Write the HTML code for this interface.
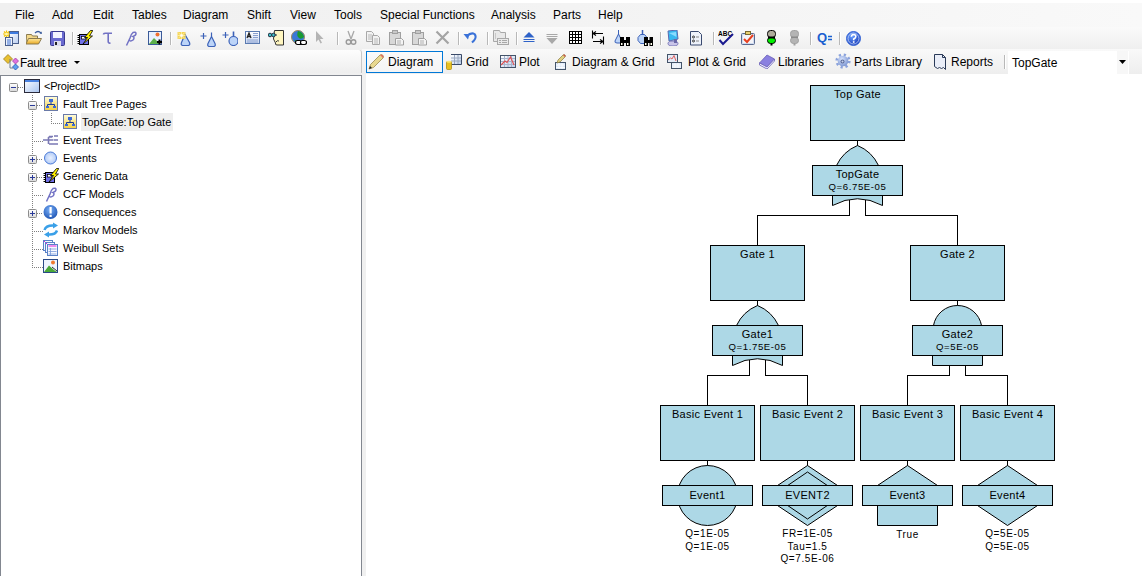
<!DOCTYPE html><html><head><meta charset="utf-8"><style>
*{margin:0;padding:0;box-sizing:border-box}
html,body{width:1142px;height:576px;overflow:hidden;background:#fff;font-family:"Liberation Sans",sans-serif;position:relative}
.a{position:absolute}
#menubar{left:0;top:3px;width:1142px;height:24px;background:linear-gradient(to right,#f0f0f0 0%,#f3f3f3 50%,#f9f9f9 100%)}
.m{position:absolute;top:5px;font-size:12px;color:#000;white-space:nowrap}
#tb1{left:0;top:27px;width:1142px;height:22px;background:linear-gradient(to bottom,#fafafa,#efefef)}
#tb2bg{left:0;top:49px;width:366px;height:26px;background:#f0f0f0}
#tb2l{left:0;top:50px;width:362px;height:23px;background:linear-gradient(to bottom,#fdfdfd,#eeeeee);border-right:1px solid #c8c8c8;border-top-right-radius:3px}
#tb2r{left:362px;top:49px;width:780px;height:25px;background:linear-gradient(to bottom,#f9f9f9,#eeeeee)}
.sep{position:absolute;width:1px;background:#b8b8b8;box-shadow:1px 0 0 #fff}
.t2{position:absolute;top:55px;font-size:12px;color:#000;white-space:nowrap}
#tree{left:0;top:75px;width:362px;height:501px;border:1px solid #828790;border-bottom:none;background:#fff}
#gap{left:362px;top:74px;width:4px;height:502px;background:#f0f0f0}
.tr{position:absolute;font-size:11px;color:#000;white-space:nowrap;line-height:13px}
svg text{font-family:"Liberation Sans",sans-serif}
</style></head><body>
<div id="menubar" class="a">
<span class="m" style="left:15px">File</span>
<span class="m" style="left:52px">Add</span>
<span class="m" style="left:93px">Edit</span>
<span class="m" style="left:132px">Tables</span>
<span class="m" style="left:183px">Diagram</span>
<span class="m" style="left:247px">Shift</span>
<span class="m" style="left:290px">View</span>
<span class="m" style="left:334px">Tools</span>
<span class="m" style="left:380px">Special Functions</span>
<span class="m" style="left:491px">Analysis</span>
<span class="m" style="left:553px">Parts</span>
<span class="m" style="left:598px">Help</span>
</div>
<div id="tb1" class="a"></div>
<div id="tb2bg" class="a"></div>
<div id="tb2l" class="a"></div>
<div id="tb2r" class="a"></div>
<div id="tree" class="a"></div>
<div id="gap" class="a"></div>
<div class="sep" style="left:72px;top:32px;height:13px"></div>
<div class="sep" style="left:170px;top:32px;height:13px"></div>
<div class="sep" style="left:337px;top:32px;height:13px"></div>
<div class="sep" style="left:458px;top:32px;height:13px"></div>
<div class="sep" style="left:487px;top:32px;height:13px"></div>
<div class="sep" style="left:516px;top:32px;height:13px"></div>
<div class="sep" style="left:660px;top:32px;height:13px"></div>
<div class="sep" style="left:713px;top:32px;height:13px"></div>
<div class="sep" style="left:810px;top:32px;height:13px"></div>
<div class="sep" style="left:839px;top:32px;height:13px"></div>
<div class="a" style="left:366px;top:51px;width:77px;height:22px;border:1px solid #0078d7;background:rgba(255,255,255,0.35)"></div>
<span class="t2" style="left:388px">Diagram</span>
<span class="t2" style="left:466px">Grid</span>
<span class="t2" style="left:519px">Plot</span>
<span class="t2" style="left:572px">Diagram &amp; Grid</span>
<span class="t2" style="left:688px">Plot &amp; Grid</span>
<span class="t2" style="left:778px">Libraries</span>
<span class="t2" style="left:854px">Parts Library</span>
<span class="t2" style="left:951px">Reports</span>
<div class="sep" style="left:1004px;top:55px;height:14px"></div>
<div class="a" style="left:1008px;top:51px;width:121px;height:23px;background:#fff"></div>
<div class="a" style="left:1117px;top:51px;width:11px;height:23px;background:#f7f7f7"></div>
<span class="t2" style="left:1012px;top:56px">TopGate</span>
<svg class="a" style="left:1119px;top:60px" width="8" height="5"><path d="M0,0H7L3.5,4Z" fill="#000"/></svg>
<span class="t2" style="left:20px;top:56px;letter-spacing:-0.4px">Fault tree</span>
<svg class="a" style="left:74px;top:61px" width="8" height="5"><path d="M0,0H6L3,3Z" fill="#000"/></svg>
<div class="a" style="left:81px;top:113px;width:92px;height:18px;background:#eeeeee"></div>
<span class="tr" style="left:44px;top:80px;letter-spacing:-0.2px">&lt;ProjectID&gt;</span>
<span class="tr" style="left:63px;top:98px">Fault Tree Pages</span>
<span class="tr" style="left:82px;top:116px">TopGate:Top Gate</span>
<span class="tr" style="left:63px;top:134px">Event Trees</span>
<span class="tr" style="left:63px;top:152px">Events</span>
<span class="tr" style="left:63px;top:170px">Generic Data</span>
<span class="tr" style="left:63px;top:188px">CCF Models</span>
<span class="tr" style="left:63px;top:206px">Consequences</span>
<span class="tr" style="left:63px;top:224px">Markov Models</span>
<span class="tr" style="left:63px;top:242px">Weibull Sets</span>
<span class="tr" style="left:63px;top:260px">Bitmaps</span>
<svg class="a" style="left:3px;top:30px" width="16" height="16" viewBox="0 0 16 16"><defs><linearGradient id="gw" x1="0" y1="0" x2="1" y2="1"><stop offset="0" stop-color="#fff"/><stop offset="1" stop-color="#b9cdf0"/></linearGradient></defs>
<rect x="6.5" y="1.5" width="9" height="12" fill="url(#gw)" stroke="#4a5f8c"/><rect x="7" y="2" width="8" height="2" fill="#3d7be0"/>
<path d="M3.5,0.5v7M0,4h7M1,1.5l5,5M6,1.5l-5,5" stroke="#f2c300" stroke-width="1.2"/><circle cx="3.5" cy="4" r="1.5" fill="#fff6b0"/>
<rect x="2.5" y="7.5" width="7" height="8" fill="#eef3fb" stroke="#4a5f8c"/><path d="M4,10h4M4,12h4M4,14h4" stroke="#3d6fd0"/></svg>
<svg class="a" style="left:26px;top:30px" width="16" height="16" viewBox="0 0 16 16"><defs><linearGradient id="go" x1="0" y1="0" x2="0" y2="1"><stop offset="0" stop-color="#ffe9a0"/><stop offset="1" stop-color="#e8a820"/></linearGradient></defs>
<path d="M0.5,4.5h5l1,1.5h5v7.5h-11.5z" fill="#f3d88a" stroke="#8a7a50"/><path d="M2.5,8.5h13l-3,5.5h-12.5z" fill="url(#go)" stroke="#8a7a50"/>
<path d="M9,3 Q12,0 15,3" fill="none" stroke="#3a5c9c" stroke-width="1.2"/><path d="M13.5,3.5l2.5,0.5l-0.5,-2.5z" fill="#3a5c9c"/></svg>
<svg class="a" style="left:50px;top:31px" width="16" height="16" viewBox="0 0 16 16"><rect x="0.5" y="0.5" width="14" height="14" rx="1" fill="#6a6ad0" stroke="#3a3a90"/><rect x="3" y="1" width="9" height="6" fill="#f4f4ff"/><rect x="4" y="10" width="7" height="5" fill="#dde"/><rect x="5" y="11" width="2" height="3" fill="#222"/></svg>
<svg class="a" style="left:77px;top:30px" width="16" height="16" viewBox="0 0 16 16"><rect x="2.5" y="4.5" width="9" height="10" fill="#7070e8" stroke="#000"/><path d="M0.5,5.5h2M0.5,7.5h2M0.5,9.5h2M0.5,11.5h2M0.5,13.5h2" stroke="#000"/><rect x="4.5" y="6.5" width="4" height="2.5" fill="#fff" stroke="#000" stroke-width=".7"/>
<path d="M13.5,0.5 L7.5,7.5 L10.5,7.5 L6,14 L15.5,6 L12.5,6 L15.8,0.5Z" fill="#fff000" stroke="#000" stroke-width=".8"/></svg>
<svg class="a" style="left:100px;top:30px" width="16" height="16" viewBox="0 0 16 16"><path d="M3.5,4.5 Q3.5,3 6,3.2 L12,3.2 M8.2,3.2 V11.5 Q8.2,13.5 10.5,13" fill="none" stroke="#7272c4" stroke-width="1.6"/></svg>
<svg class="a" style="left:123px;top:30px" width="16" height="16" viewBox="0 0 16 16"><path d="M3.5,15.5 L7,8 Q8,4 10,2.5 Q13,1.5 13,3.5 Q13,5.5 10,6.5 Q12,7.5 10,10 Q8,11.5 6.5,10.5" fill="none" stroke="#7272c4" stroke-width="1.5"/></svg>
<svg class="a" style="left:147px;top:30px" width="16" height="16" viewBox="0 0 16 16"><rect x="1.5" y="1.5" width="13" height="13" fill="#e8f0ff" stroke="#3a5a98"/><path d="M2,14 L7,8 L12,13 L12,14Z" fill="#5bb048"/><circle cx="10.5" cy="4.5" r="2" fill="#f07030"/><path d="M10,12h5M12.5,9.5v5" stroke="#000" stroke-width="2"/></svg>
<svg class="a" style="left:176px;top:30px" width="16" height="16" viewBox="0 0 16 16"><path d="M9,4.5 L13.5,12.5 Q14.5,15.5 12,15.5 L7,15.5 Q4.5,15.5 5.5,12.5 Z" fill="#bcd4f8" stroke="#3c62b8" stroke-width="1.2"/><rect x="1.5" y="2" width="8" height="7" fill="#f4d048" opacity=".9"/><path d="M5.5,2v7M1.5,5.5h8M2.5,3l6,5M8.5,3l-6,5" stroke="#fff4b0" stroke-width=".8"/><circle cx="5.5" cy="5.5" r="1.2" fill="#fff"/></svg>
<svg class="a" style="left:200px;top:31px" width="16" height="16" viewBox="0 0 16 16"><path d="M0.5,5h6M3.5,2v6" stroke="#3c62b8" stroke-width="1.2"/><path d="M11.5,1.5v4" stroke="#3c62b8" stroke-width="1.2"/>
<path d="M11.5,5.5 L15,12.5 Q16,15.5 13.5,15.5 L9.5,15.5 Q7,15.5 8,12.5 Z" fill="#bcd4f8" stroke="#3c62b8" stroke-width="1.2"/></svg>
<svg class="a" style="left:222px;top:30px" width="16" height="16" viewBox="0 0 16 16"><path d="M0.5,5h6M3.5,2v6" stroke="#3c62b8" stroke-width="1.2"/><path d="M11.5,1.5v5" stroke="#3c62b8" stroke-width="1.6"/>
<circle cx="11.5" cy="11" r="4.5" fill="#bcd4f8" stroke="#3c62b8" stroke-width="1.2"/></svg>
<svg class="a" style="left:245px;top:30px" width="16" height="16" viewBox="0 0 16 16"><defs><linearGradient id="gt" x1="0" y1="0" x2="0" y2="1"><stop offset="0" stop-color="#fff"/><stop offset="1" stop-color="#c8d6f0"/></linearGradient></defs>
<rect x="0.5" y="1.5" width="14" height="12" fill="url(#gt)" stroke="#5a7ab0"/><path d="M2,8 L4,3 L6,8 M2.8,6.5h2.4" fill="none" stroke="#222" stroke-width="1.3"/><path d="M8,3.5h5M8,5.5h5M8,7.5h5M2,10h11M2,12h11" stroke="#8aa0d0"/></svg>
<svg class="a" style="left:268px;top:30px" width="16" height="16" viewBox="0 0 16 16"><path d="M6.5,0.5 L15.5,0.5 L15.5,15 L9,15 Q7,15 7.5,13 L5.5,9 Z" fill="#fff6c0" stroke="#333"/><path d="M8,12 Q9,10 11,11" fill="none" stroke="#333"/>
<circle cx="2" cy="5" r="1.8" fill="#40c0c8" stroke="#234"/><circle cx="5.5" cy="5" r="1.8" fill="#40c0c8" stroke="#234"/><path d="M6.5,5 H9" stroke="#234"/></svg>
<svg class="a" style="left:291px;top:30px" width="16" height="16" viewBox="0 0 16 16"><circle cx="7" cy="7" r="6.5" fill="#3a78d8" stroke="#a08a60"/><path d="M7,1 Q12,2 13,7 Q10,10 8,8 Q5,6 7,1Z" fill="#1a9a30"/><path d="M3,10 Q5,9 6,12" fill="#1a9a30"/>
<rect x="4.5" y="10.5" width="6" height="4" rx="2" fill="#fff" stroke="#000" stroke-width="1.2"/><rect x="9.5" y="10.5" width="6" height="4" rx="2" fill="#fff" stroke="#000" stroke-width="1.2"/></svg>
<svg class="a" style="left:314px;top:30px" width="16" height="16" viewBox="0 0 16 16"><path d="M2,1 L2,12 L4.5,9.5 L6.5,13.5 L8,12.8 L6,9 L9.5,9Z" fill="#b4b4b4"/></svg>
<svg class="a" style="left:343px;top:30px" width="16" height="16" viewBox="0 0 16 16"><path d="M5,1 L8,9 M11,1 L8,9" stroke="#a8a8a8" stroke-width="1.3"/><circle cx="5.5" cy="12" r="2.3" fill="#eee" stroke="#9a9a9a" stroke-width="1.4"/><circle cx="10.5" cy="12" r="2.3" fill="#eee" stroke="#9a9a9a" stroke-width="1.4"/></svg>
<svg class="a" style="left:366px;top:30px" width="16" height="16" viewBox="0 0 16 16"><path d="M0.5,1.5h5l2,2v8h-7z" fill="#f2f2f2" stroke="#a8a8a8"/><path d="M6.5,5.5h5l2,2v7h-7z" fill="#f2f2f2" stroke="#a8a8a8"/><path d="M2,5h4M2,7h4M2,9h4M8,9h4M8,11h4M8,13h4" stroke="#b8b8b8"/></svg>
<svg class="a" style="left:389px;top:30px" width="16" height="16" viewBox="0 0 16 16"><rect x="0.5" y="2.5" width="11" height="12" fill="#d8d8d8" stroke="#a0a0a0"/><rect x="3.5" y="0.5" width="5" height="3" fill="#c8c8c8" stroke="#a0a0a0"/><path d="M6.5,8.5h6l2,2v4.5h-8z" fill="#f4f4f4" stroke="#a0a0a0"/><path d="M8,11h4M8,13h4" stroke="#b0b0b0"/></svg>
<svg class="a" style="left:412px;top:30px" width="16" height="16" viewBox="0 0 16 16"><rect x="0.5" y="2.5" width="11" height="12" fill="#d8d8d8" stroke="#a0a0a0"/><rect x="3.5" y="0.5" width="5" height="3" fill="#c8c8c8" stroke="#a0a0a0"/><path d="M6.5,8.5h6l2,2v4.5h-8z" fill="#f4f4f4" stroke="#a0a0a0"/><path d="M8,11h4M8,13h4" stroke="#b0b0b0"/></svg>
<svg class="a" style="left:435px;top:30px" width="16" height="16" viewBox="0 0 16 16"><path d="M1.5,1.5 L13.5,13.5 M13.5,1.5 L1.5,13.5" stroke="#a4a4a4" stroke-width="2.2"/></svg>
<svg class="a" style="left:463px;top:30px" width="16" height="16" viewBox="0 0 16 16"><path d="M3.5,6.5 Q8,2 11.5,4 Q14,7 11,10.5 L9,12.5" fill="none" stroke="#3a72d8" stroke-width="2"/><path d="M0.5,4 L5,9.5 L6.5,4Z" fill="#3a72d8"/></svg>
<svg class="a" style="left:493px;top:30px" width="16" height="16" viewBox="0 0 16 16"><path d="M0.5,0.5h6l1,2h5v9h-12z" fill="#e8e8e8" stroke="#a8a8a8"/><rect x="4.5" y="8.5" width="11" height="6" fill="#eaeaea" stroke="#a8a8a8"/><path d="M2,4h1M2,6h1M2,8h1M6,10.5h2M9,10.5h5M6,12.5h2M9,12.5h5" stroke="#a8a8a8"/></svg>
<svg class="a" style="left:522px;top:30px" width="16" height="16" viewBox="0 0 16 16"><path d="M1.5,7.5 L7,2 L12.5,7.5Z" fill="#2e62c8"/><path d="M1.5,9.5h11M1.5,11.5h11" stroke="#2e62c8" stroke-width="1.2"/></svg>
<svg class="a" style="left:545px;top:30px" width="16" height="16" viewBox="0 0 16 16"><path d="M1.5,4.5h11M1.5,6.5h11" stroke="#a8a8a8" stroke-width="1.2"/><path d="M1.5,8 L7,14 L12.5,8Z" fill="#a8a8a8"/></svg>
<svg class="a" style="left:568px;top:30px" width="16" height="16" viewBox="0 0 16 16"><rect x="1" y="1" width="13" height="13" fill="#000"/><g fill="#fff"><rect x="2" y="2" width="2" height="2"/><rect x="5" y="2" width="2" height="2"/><rect x="8" y="2" width="2" height="2"/><rect x="11" y="2" width="2" height="2"/>
<rect x="2" y="5" width="2" height="2"/><rect x="5" y="5" width="2" height="2"/><rect x="8" y="5" width="2" height="2"/><rect x="11" y="5" width="2" height="2"/>
<rect x="2" y="8" width="2" height="2"/><rect x="5" y="8" width="2" height="2"/><rect x="8" y="8" width="2" height="2"/><rect x="11" y="8" width="2" height="2"/>
<rect x="2" y="11" width="2" height="2"/><rect x="5" y="11" width="2" height="2"/><rect x="8" y="11" width="2" height="2"/><rect x="11" y="11" width="2" height="2"/></g></svg>
<svg class="a" style="left:591px;top:30px" width="16" height="16" viewBox="0 0 16 16"><path d="M1.5,0.5v8M2,3.5h10M2,3.5l3,-2M2,3.5l3,2M12.5,6.5v8M2,11.5h10M12,11.5l-3,-2M12,11.5l-3,2" fill="none" stroke="#000" stroke-width="1.1"/></svg>
<svg class="a" style="left:614px;top:30px" width="16" height="16" viewBox="0 0 16 16"><path d="M4.5,0v5" stroke="#3c62b8"/><path d="M4.5,4 L8,11 Q8.5,13 6,13 L3,13 Q0.5,13 1,11Z" fill="#bcd4f8" stroke="#3c62b8"/>
<g fill="#000"><rect x="6" y="7" width="4" height="9"/><rect x="12" y="7" width="4" height="9"/><rect x="9" y="10" width="4" height="3"/></g><g fill="#ffe"><rect x="7" y="13" width="1.5" height="2"/><rect x="13" y="13" width="1.5" height="2"/></g></svg>
<svg class="a" style="left:637px;top:30px" width="16" height="16" viewBox="0 0 16 16"><path d="M5.5,0v4" stroke="#3c62b8" stroke-width="1.5"/><path d="M3.5,4.5h4l2.5,3v3l-2.5,3h-4l-2.5,-3v-3z" fill="#bcd4f8" stroke="#3c62b8"/>
<g fill="#000"><rect x="7" y="7" width="4" height="9"/><rect x="12.5" y="7" width="3.5" height="9"/><rect x="10" y="10" width="3" height="3"/></g><g fill="#ffe"><rect x="8" y="13" width="1.5" height="2"/><rect x="13.5" y="13" width="1.5" height="2"/></g></svg>
<svg class="a" style="left:665px;top:30px" width="16" height="16" viewBox="0 0 16 16"><path d="M3,1 L12,0 L13,9 L4,11Z" fill="#38b8f0" stroke="#5a6ab0"/><path d="M4,3 L11,2 L11.5,7Z" fill="#8adcff"/><ellipse cx="8" cy="13.5" rx="5" ry="2.5" fill="#c8c4e8" stroke="#7a78b8"/><rect x="9" y="9" width="3" height="4" fill="#6a68a8"/></svg>
<svg class="a" style="left:688px;top:30px" width="16" height="16" viewBox="0 0 16 16"><path d="M2.5,1.5h8l3,3v10.5h-11z" fill="#eef2fa" stroke="#3a4a70"/><circle cx="5.5" cy="7" r="1" fill="none" stroke="#333"/><circle cx="5.5" cy="11" r="1" fill="none" stroke="#333"/><path d="M8,7h3M8,11h3" stroke="#888"/></svg>
<svg class="a" style="left:718px;top:30px" width="16" height="16" viewBox="0 0 16 16"><text x="0" y="6" font-size="6.5" font-family="Liberation Mono" font-weight="bold" fill="#000">ABC</text><path d="M1.5,10 L5,14 L15,4" fill="none" stroke="#1a1a90" stroke-width="2"/></svg>
<svg class="a" style="left:741px;top:30px" width="16" height="16" viewBox="0 0 16 16"><rect x="0.5" y="3.5" width="13" height="11" rx="1" fill="#d0dcf0" stroke="#5a6a90"/><rect x="4.5" y="1.5" width="5" height="3" fill="#e8d070" stroke="#7a6a30"/><rect x="2" y="5" width="10" height="8" fill="#f4f4f8"/><path d="M3,9 L6,12 L12,5" fill="none" stroke="#e84020" stroke-width="2"/></svg>
<svg class="a" style="left:764px;top:30px" width="16" height="16" viewBox="0 0 16 16"><rect x="3.5" y="0.5" width="8" height="7" rx="3" fill="#b0ac9c" stroke="#000"/><rect x="3.5" y="7.5" width="8" height="6" rx="3" fill="#00f000" stroke="#000"/><rect x="4" y="6.5" width="7" height="2" fill="#000"/><rect x="6.5" y="13.5" width="2" height="2" fill="#000"/></svg>
<svg class="a" style="left:787px;top:30px" width="16" height="16" viewBox="0 0 16 16"><rect x="3.5" y="0.5" width="8" height="7" rx="3" fill="#b4b4b4" stroke="#a0a0a0"/><rect x="3.5" y="7.5" width="8" height="6" rx="3" fill="#b4b4b4" stroke="#a0a0a0"/><rect x="4" y="6.5" width="7" height="1.5" fill="#8a8a8a"/><rect x="6.5" y="13.5" width="2" height="2" fill="#a0a0a0"/></svg>
<svg class="a" style="left:817px;top:29px" width="16" height="16" viewBox="0 0 16 16"><text x="0" y="13" font-size="13" font-family="Liberation Serif" font-weight="bold" fill="#1a5fd0">Q</text><path d="M11,7.5h4M11,10.5h4" stroke="#1a5fd0" stroke-width="1.6"/></svg>
<svg class="a" style="left:846px;top:31px" width="16" height="16" viewBox="0 0 16 16"><defs><radialGradient id="gh" cx=".4" cy=".35" r=".7"><stop offset="0" stop-color="#6aa0ff"/><stop offset="1" stop-color="#1030b0"/></radialGradient></defs><circle cx="7.5" cy="7.5" r="7" fill="url(#gh)" stroke="#3a6ad8"/><circle cx="7.5" cy="7.5" r="5.5" fill="none" stroke="#c8dcff" stroke-width=".8"/>
<path d="M5.3,5.8 Q5.5,3.5 7.6,3.5 Q10,3.6 9.8,5.6 Q9.6,7 7.7,8 L7.7,9.2" fill="none" stroke="#fff" stroke-width="1.6"/><rect x="6.9" y="10.2" width="1.6" height="1.6" fill="#fff"/></svg>
<svg class="a" style="left:3px;top:54px" width="16" height="16" viewBox="0 0 16 16"><path d="M0.5,5 L5,0.5 L9.5,5 L5,9.5Z" fill="#e8c030" stroke="#a08020" stroke-width=".8"/><path d="M7,5v9h3" fill="none" stroke="#708090"/><path d="M9.5,7 L12.5,4 L15.5,7 L12.5,10Z" fill="#e070e0" stroke="#a040a0" stroke-width=".8"/><path d="M9.5,13 L12.5,10 L15.5,13 L12.5,16Z" fill="#60a0f0" stroke="#2050b0" stroke-width=".8"/></svg>
<svg class="a" style="left:368px;top:54px" width="16" height="16" viewBox="0 0 16 16"><path d="M1,15 L2.5,10.5 L12,1 Q13.5,0 15,1.5 Q16,3 15,4 L5.5,13.5Z" fill="#e8d890" stroke="#9a8a50" stroke-width=".8"/><path d="M12,1 Q13.5,0 15,1.5 Q16,3 15,4 L13,2Z" fill="#e07060"/><path d="M1,15 L2,12 L4,14Z" fill="#222"/></svg>
<svg class="a" style="left:446px;top:54px" width="16" height="16" viewBox="0 0 16 16"><defs><linearGradient id="gg" x1="0" y1="0" x2="1" y2="1"><stop offset="0" stop-color="#fff"/><stop offset="1" stop-color="#b8cce8"/></linearGradient></defs><rect x="5" y="1" width="10.5" height="9.5" fill="url(#gg)"/><path d="M5,4h10M5,7h10M8.5,1v9M12,1v9" stroke="#9aa8c0" stroke-width="1"/><path d="M5,0.5h10.5v10h-10" fill="none" stroke="#3a4a68"/><rect x="0.5" y="7.5" width="5" height="8" rx="1" fill="#e8c020" stroke="#b09010" stroke-width=".8"/><ellipse cx="3" cy="7.8" rx="2.5" ry="1" fill="#f8e878"/></svg>
<svg class="a" style="left:500px;top:53px" width="16" height="16" viewBox="0 0 16 16"><defs><linearGradient id="gq" x1="0" y1="0" x2="1" y2="1"><stop offset="0" stop-color="#fff"/><stop offset="1" stop-color="#c0d0ec"/></linearGradient></defs><rect x="0.5" y="2.5" width="15" height="12" fill="url(#gq)" stroke="#44546a"/><path d="M1,5.5h14M1,8.5h14M1,11.5h14M4.5,3v11M8,3v11M11.5,3v11" stroke="#a8b4cc" stroke-width="1"/><path d="M1,12 L5,8 L7,9.5 L10.5,4 L14,12" fill="none" stroke="#e05050" stroke-width="1.1"/></svg>
<svg class="a" style="left:554px;top:54px" width="16" height="16" viewBox="0 0 16 16"><rect x="1.5" y="8.5" width="10" height="7" fill="#dde8f8" stroke="#44546a"/><path d="M2,11h9M2,13.5h9M5,9v6M8,9v6" stroke="#fff" stroke-width=".8"/><path d="M3,9 L4,6 L9,1 Q10,0 11,1 Q12,2 11,3 L6,8Z" fill="#e0d080" stroke="#8a7a40" stroke-width=".7"/><path d="M9,1 Q10,0 11,1 Q12,2 11,3Z" fill="#d05050"/></svg>
<svg class="a" style="left:667px;top:53px" width="16" height="16" viewBox="0 0 16 16"><rect x="0.5" y="1.5" width="10" height="8" fill="#e4ecf8" stroke="#44546a"/><path d="M1,7 L3.5,5 L5,6 L7,2.5 L9,8" fill="none" stroke="#e06060"/><rect x="4.5" y="9.5" width="10" height="6" fill="#dde8f8" stroke="#44546a"/><path d="M5,12h9M5,14h9M8,10v5M11,10v5" stroke="#fff" stroke-width=".8"/></svg>
<svg class="a" style="left:759px;top:53px" width="16" height="16" viewBox="0 0 16 16"><path d="M0.5,10 L8,2 L15.5,6 L8,14Z" fill="#8a80e0" stroke="#6a60b8" stroke-width=".8"/><path d="M0.5,10 L8,14 L15.5,6 L15.5,8 L8,16 L0.5,12Z" fill="#f0f0ff" stroke="#6a60b8" stroke-width=".8"/></svg>
<svg class="a" style="left:835px;top:53px" width="16" height="16" viewBox="0 0 16 16"><defs><radialGradient id="gge" cx=".4" cy=".35" r=".7"><stop offset="0" stop-color="#d8e4ff"/><stop offset="1" stop-color="#7a94d0"/></radialGradient></defs><circle cx="8" cy="8" r="6.3" fill="none" stroke="#8aa2dc" stroke-width="2.6" stroke-dasharray="2.2 2.75"/><circle cx="8" cy="8" r="5.3" fill="url(#gge)"/><circle cx="7.5" cy="8.5" r="2" fill="#5a6a98"/><circle cx="7.5" cy="8.5" r="1" fill="#c8d4f0"/></svg>
<svg class="a" style="left:933px;top:54px" width="16" height="16" viewBox="0 0 16 16"><path d="M1.5,0.5h8l3,3v12 l-2,-2 l-2,1 l-2,-1 l-2,1 l-3,-2z" fill="#eaeef8" stroke="#2a3a58"/><path d="M9.5,0.5v3h3" fill="none" stroke="#2a3a58"/></svg>
<svg class="a" style="left:24px;top:78px" width="16" height="16" viewBox="0 0 16 16"><defs><linearGradient id="gp" x1="0" y1="0" x2="1" y2="1"><stop offset="0" stop-color="#fff"/><stop offset="1" stop-color="#a8c4f0"/></linearGradient></defs><rect x="0.5" y="1.5" width="15" height="13" fill="url(#gp)" stroke="#2a2a3a"/><rect x="1" y="2" width="14" height="2" fill="#4a82e0"/></svg>
<svg class="a" style="left:43px;top:96px" width="16" height="16" viewBox="0 0 16 16"><defs><linearGradient id="gf" x1="0" y1="0" x2="0" y2="1"><stop offset="0" stop-color="#fffde0"/><stop offset="1" stop-color="#f4d040"/></linearGradient></defs><rect x="1.5" y="0.5" width="13" height="14" fill="url(#gf)" stroke="#6a7aa8"/><rect x="6" y="3" width="4" height="3" fill="#3a6ad8"/><path d="M8,6v2M4.5,10V8.5h7V10" fill="none" stroke="#1a3a98"/><rect x="3" y="10" width="3" height="2" fill="#3a6ad8"/><rect x="10" y="10" width="3" height="2" fill="#3a6ad8"/></svg>
<svg class="a" style="left:62px;top:114px" width="16" height="16" viewBox="0 0 16 16"><defs><linearGradient id="gf" x1="0" y1="0" x2="0" y2="1"><stop offset="0" stop-color="#fffde0"/><stop offset="1" stop-color="#f4d040"/></linearGradient></defs><rect x="1.5" y="0.5" width="13" height="14" fill="url(#gf)" stroke="#6a7aa8"/><rect x="6" y="3" width="4" height="3" fill="#3a6ad8"/><path d="M8,6v2M4.5,10V8.5h7V10" fill="none" stroke="#1a3a98"/><rect x="3" y="10" width="3" height="2" fill="#3a6ad8"/><rect x="10" y="10" width="3" height="2" fill="#3a6ad8"/></svg>
<svg class="a" style="left:43px;top:132px" width="16" height="16" viewBox="0 0 16 16"><path d="M0,8h5M5.5,5v7M5.5,8h5M5.5,5h3.5M6,4.5h4M6,12h9M11,4h4M11,8h4" fill="none" stroke="#7a78b4" stroke-width="1.6"/></svg>
<svg class="a" style="left:43px;top:150px" width="16" height="16" viewBox="0 0 16 16"><defs><radialGradient id="ge" cx=".5" cy=".5" r=".6"><stop offset="0" stop-color="#e8f0ff"/><stop offset="1" stop-color="#a8c4f4"/></radialGradient></defs><circle cx="7.5" cy="8" r="6" fill="url(#ge)" stroke="#4a7ad8"/></svg>
<svg class="a" style="left:43px;top:168px" width="16" height="16" viewBox="0 0 16 16"><rect x="2.5" y="4.5" width="9" height="10" fill="#7070e8" stroke="#000"/><path d="M0.5,5.5h2M0.5,7.5h2M0.5,9.5h2M0.5,11.5h2M0.5,13.5h2" stroke="#000"/><rect x="4.5" y="6.5" width="4" height="2.5" fill="#fff" stroke="#000" stroke-width=".7"/>
<path d="M13.5,0.5 L7.5,7.5 L10.5,7.5 L6,14 L15.5,6 L12.5,6 L15.8,0.5Z" fill="#fff000" stroke="#000" stroke-width=".8"/></svg>
<svg class="a" style="left:43px;top:186px" width="16" height="16" viewBox="0 0 16 16"><path d="M3.5,15.5 L7,8 Q8,4 10,2.5 Q13,1.5 13,3.5 Q13,5.5 10,6.5 Q12,7.5 10,10 Q8,11.5 6.5,10.5" fill="none" stroke="#7272c4" stroke-width="1.5"/></svg>
<svg class="a" style="left:43px;top:204px" width="16" height="16" viewBox="0 0 16 16"><defs><radialGradient id="gc" cx=".45" cy=".35" r=".7"><stop offset="0" stop-color="#7ab0f8"/><stop offset="1" stop-color="#1a50b0"/></radialGradient></defs><circle cx="7.5" cy="8" r="7" fill="url(#gc)"/><rect x="6.5" y="3" width="2.2" height="6.5" fill="#fff"/><rect x="6.5" y="10.8" width="2.2" height="2.2" fill="#fff"/></svg>
<svg class="a" style="left:43px;top:222px" width="16" height="16" viewBox="0 0 16 16"><path d="M1.5,8 Q3,3 11,3.5" fill="none" stroke="#3aa0e8" stroke-width="2.5"/><path d="M10,0.5 L15,3.5 L10,6.5Z" fill="#3aa0e8"/><path d="M14,8.5 Q12.5,13 5,12.5" fill="none" stroke="#3aa0e8" stroke-width="2.5"/><path d="M6,9.5 L1,12.5 L6,15.5Z" fill="#3aa0e8"/></svg>
<svg class="a" style="left:43px;top:240px" width="16" height="16" viewBox="0 0 16 16"><rect x="0.5" y="0.5" width="9" height="10" fill="#f4f8ff" stroke="#5a82c8"/><rect x="2.5" y="2.5" width="9" height="10" fill="#f4f8ff" stroke="#5a82c8"/><rect x="4.5" y="4.5" width="10" height="11" fill="#f8faff" stroke="#5a82c8"/><path d="M1,1.5h1M3,3.5h1M5.5,6h8" stroke="#e020e0"/><path d="M5.5,9h8M5.5,11.5h8M5.5,14h8M7.5,8v7" stroke="#7a9ad8" stroke-width=".8"/></svg>
<svg class="a" style="left:43px;top:258px" width="16" height="16" viewBox="0 0 16 16"><rect x="0.5" y="1.5" width="14" height="13" fill="#eef4ff" stroke="#2a4a88"/><path d="M1,14 L6,7.5 L11,12 L14,14Z" fill="#4aa838"/><path d="M9,9 L14,13" stroke="#333"/><circle cx="10" cy="4.5" r="2" fill="#f07a30"/></svg>
<div class="a" style="left:18px;top:87px;width:6px;height:1px;background:repeating-linear-gradient(to right,#808080 0 1px,transparent 1px 2px)"></div>
<div class="a" style="left:32px;top:95px;width:1px;height:172px;background:repeating-linear-gradient(to bottom,#808080 0 1px,transparent 1px 2px)"></div>
<div class="a" style="left:37px;top:105px;width:6px;height:1px;background:repeating-linear-gradient(to right,#808080 0 1px,transparent 1px 2px)"></div>
<div class="a" style="left:51px;top:113px;width:1px;height:11px;background:repeating-linear-gradient(to bottom,#808080 0 1px,transparent 1px 2px)"></div>
<div class="a" style="left:51px;top:123px;width:11px;height:1px;background:repeating-linear-gradient(to right,#808080 0 1px,transparent 1px 2px)"></div>
<div class="a" style="left:32px;top:141px;width:11px;height:1px;background:repeating-linear-gradient(to right,#808080 0 1px,transparent 1px 2px)"></div>
<div class="a" style="left:37px;top:159px;width:6px;height:1px;background:repeating-linear-gradient(to right,#808080 0 1px,transparent 1px 2px)"></div>
<div class="a" style="left:37px;top:177px;width:6px;height:1px;background:repeating-linear-gradient(to right,#808080 0 1px,transparent 1px 2px)"></div>
<div class="a" style="left:32px;top:195px;width:11px;height:1px;background:repeating-linear-gradient(to right,#808080 0 1px,transparent 1px 2px)"></div>
<div class="a" style="left:37px;top:213px;width:6px;height:1px;background:repeating-linear-gradient(to right,#808080 0 1px,transparent 1px 2px)"></div>
<div class="a" style="left:32px;top:231px;width:11px;height:1px;background:repeating-linear-gradient(to right,#808080 0 1px,transparent 1px 2px)"></div>
<div class="a" style="left:32px;top:249px;width:11px;height:1px;background:repeating-linear-gradient(to right,#808080 0 1px,transparent 1px 2px)"></div>
<div class="a" style="left:32px;top:267px;width:11px;height:1px;background:repeating-linear-gradient(to right,#808080 0 1px,transparent 1px 2px)"></div>
<svg class="a" style="left:9px;top:83px" width="9" height="9"><defs><linearGradient id="gpm" x1="0" y1="0" x2="0" y2="1"><stop offset="0" stop-color="#fff"/><stop offset="1" stop-color="#d8d8d8"/></linearGradient></defs><rect x=".5" y=".5" width="8" height="8" rx="1" fill="url(#gpm)" stroke="#8c8c8c"/><path d="M2,4.5h5" stroke="#2a3a98"/></svg>
<svg class="a" style="left:28px;top:101px" width="9" height="9"><defs><linearGradient id="gpm" x1="0" y1="0" x2="0" y2="1"><stop offset="0" stop-color="#fff"/><stop offset="1" stop-color="#d8d8d8"/></linearGradient></defs><rect x=".5" y=".5" width="8" height="8" rx="1" fill="url(#gpm)" stroke="#8c8c8c"/><path d="M2,4.5h5" stroke="#2a3a98"/></svg>
<svg class="a" style="left:28px;top:155px" width="9" height="9"><defs><linearGradient id="gpm" x1="0" y1="0" x2="0" y2="1"><stop offset="0" stop-color="#fff"/><stop offset="1" stop-color="#d8d8d8"/></linearGradient></defs><rect x=".5" y=".5" width="8" height="8" rx="1" fill="url(#gpm)" stroke="#8c8c8c"/><path d="M2,4.5h5" stroke="#2a3a98"/><path d="M4.5,2v5" stroke="#2a3a98"/></svg>
<svg class="a" style="left:28px;top:173px" width="9" height="9"><defs><linearGradient id="gpm" x1="0" y1="0" x2="0" y2="1"><stop offset="0" stop-color="#fff"/><stop offset="1" stop-color="#d8d8d8"/></linearGradient></defs><rect x=".5" y=".5" width="8" height="8" rx="1" fill="url(#gpm)" stroke="#8c8c8c"/><path d="M2,4.5h5" stroke="#2a3a98"/><path d="M4.5,2v5" stroke="#2a3a98"/></svg>
<svg class="a" style="left:28px;top:209px" width="9" height="9"><defs><linearGradient id="gpm" x1="0" y1="0" x2="0" y2="1"><stop offset="0" stop-color="#fff"/><stop offset="1" stop-color="#d8d8d8"/></linearGradient></defs><rect x=".5" y=".5" width="8" height="8" rx="1" fill="url(#gpm)" stroke="#8c8c8c"/><path d="M2,4.5h5" stroke="#2a3a98"/><path d="M4.5,2v5" stroke="#2a3a98"/></svg>
<svg class="a" style="left:0;top:0" width="1142" height="576" viewBox="0 0 1142 576"><g fill="#add8e6" stroke="#000" stroke-width="1" shape-rendering="crispEdges"><rect x="810.5" y="85.5" width="94" height="55"/><text x="857.5" y="98" font-size="11" text-anchor="middle" fill="#000" stroke="none" letter-spacing="0.3">Top Gate</text><path d="M857.5,140.5 L857.5,145.5" fill="none"/><path d="M832.5,205.5 L832.5,195 L836.5,165.5 A40.2,40.2 0 0 1 857.5,145.5 A40.2,40.2 0 0 1 878.5,165.5 L882.5,195 L882.5,205.5 Q857.5,192 832.5,205.5Z" shape-rendering="auto"/><rect x="812.5" y="165.5" width="90" height="30"/><text x="857.5" y="178" font-size="11" text-anchor="middle" fill="#000" stroke="none" letter-spacing="0.3">TopGate</text><text x="857.5" y="190" font-size="9.6" text-anchor="middle" fill="#000" stroke="none" letter-spacing="0.6">Q=6.75E-05</text><path d="M757.5,245.5 L757.5,215.5 L849.5,215.5 L849.5,199.5" fill="none"/><path d="M957.5,245.5 L957.5,215.5 L865.5,215.5 L865.5,199.5" fill="none"/><rect x="710.5" y="245.5" width="94" height="55"/><text x="757.5" y="258" font-size="11" text-anchor="middle" fill="#000" stroke="none" letter-spacing="0.3">Gate 1</text><path d="M757.5,300.5 L757.5,305.5" fill="none"/><path d="M732.5,365.5 L732.5,355 L736.5,325.5 A40.2,40.2 0 0 1 757.5,305.5 A40.2,40.2 0 0 1 778.5,325.5 L782.5,355 L782.5,365.5 Q757.5,352 732.5,365.5Z" shape-rendering="auto"/><rect x="712.5" y="325.5" width="90" height="30"/><text x="757.5" y="338" font-size="11" text-anchor="middle" fill="#000" stroke="none" letter-spacing="0.3">Gate1</text><text x="757.5" y="350" font-size="9.6" text-anchor="middle" fill="#000" stroke="none" letter-spacing="0.6">Q=1.75E-05</text><path d="M707.5,405.5 L707.5,375.5 L749.5,375.5 L749.5,359.5" fill="none"/><path d="M807.5,405.5 L807.5,375.5 L765.5,375.5 L765.5,359.5" fill="none"/><rect x="910.5" y="245.5" width="94" height="55"/><text x="957.5" y="258" font-size="11" text-anchor="middle" fill="#000" stroke="none" letter-spacing="0.3">Gate 2</text><path d="M957.5,300.5 L957.5,305.5" fill="none"/><path d="M932.5,365.5 L932.5,330 L933.5,325.5 A24.4,24.4 0 0 1 981.5,325.5 L982.5,330 L982.5,365.5Z" shape-rendering="auto"/><rect x="912.5" y="325.5" width="90" height="30"/><text x="957.5" y="338" font-size="11" text-anchor="middle" fill="#000" stroke="none" letter-spacing="0.3">Gate2</text><text x="957.5" y="350" font-size="9.6" text-anchor="middle" fill="#000" stroke="none" letter-spacing="0.6">Q=5E-05</text><path d="M907.5,405.5 L907.5,375.5 L949.5,375.5 L949.5,365.5" fill="none"/><path d="M1007.5,405.5 L1007.5,375.5 L965.5,375.5 L965.5,365.5" fill="none"/><rect x="660.5" y="405.5" width="94" height="55"/><text x="707.5" y="418" font-size="11" text-anchor="middle" fill="#000" stroke="none" letter-spacing="0.3">Basic Event 1</text><path d="M707.5,460.5 L707.5,465.5" fill="none"/><rect x="760.5" y="405.5" width="94" height="55"/><text x="807.5" y="418" font-size="11" text-anchor="middle" fill="#000" stroke="none" letter-spacing="0.3">Basic Event 2</text><path d="M807.5,460.5 L807.5,465.5" fill="none"/><rect x="860.5" y="405.5" width="94" height="55"/><text x="907.5" y="418" font-size="11" text-anchor="middle" fill="#000" stroke="none" letter-spacing="0.3">Basic Event 3</text><path d="M907.5,460.5 L907.5,465.5" fill="none"/><rect x="960.5" y="405.5" width="94" height="55"/><text x="1007.5" y="418" font-size="11" text-anchor="middle" fill="#000" stroke="none" letter-spacing="0.3">Basic Event 4</text><path d="M1007.5,460.5 L1007.5,465.5" fill="none"/><circle cx="707.5" cy="495.5" r="30" shape-rendering="auto"/><path d="M807.5,465.5 L852.5,495.5 L807.5,525.5 L762.5,495.5Z" shape-rendering="auto"/><path d="M807.5,472 L842,495.5 L807.5,519 L773,495.5Z" shape-rendering="auto"/><path d="M907.5,465.5 L937.5,485.5 L937.5,525.5 L877.5,525.5 L877.5,485.5Z" shape-rendering="auto"/><path d="M1007.5,465.5 L1052.5,495.5 L1007.5,525.5 L962.5,495.5Z" shape-rendering="auto"/><rect x="662.5" y="485.5" width="90" height="20"/><text x="707.5" y="499" font-size="11" text-anchor="middle" fill="#000" stroke="none" letter-spacing="0.3">Event1</text><rect x="762.5" y="485.5" width="90" height="20"/><text x="807.5" y="499" font-size="11" text-anchor="middle" fill="#000" stroke="none" letter-spacing="0.3">EVENT2</text><rect x="862.5" y="485.5" width="90" height="20"/><text x="907.5" y="499" font-size="11" text-anchor="middle" fill="#000" stroke="none" letter-spacing="0.3">Event3</text><rect x="962.5" y="485.5" width="90" height="20"/><text x="1007.5" y="499" font-size="11" text-anchor="middle" fill="#000" stroke="none" letter-spacing="0.3">Event4</text></g><text x="707.5" y="537.0" font-size="10" text-anchor="middle" fill="#000" letter-spacing="0.6">Q=1E-05</text><text x="707.5" y="549.7" font-size="10" text-anchor="middle" fill="#000" letter-spacing="0.6">Q=1E-05</text><text x="807.5" y="537.0" font-size="10" text-anchor="middle" fill="#000" letter-spacing="0.6">FR=1E-05</text><text x="807.5" y="549.7" font-size="10" text-anchor="middle" fill="#000" letter-spacing="0.6">Tau=1.5</text><text x="807.5" y="562.4" font-size="10" text-anchor="middle" fill="#000" letter-spacing="0.6">Q=7.5E-06</text><text x="907.5" y="538.0" font-size="10" text-anchor="middle" fill="#000" letter-spacing="0.6">True</text><text x="1007.5" y="537.0" font-size="10" text-anchor="middle" fill="#000" letter-spacing="0.6">Q=5E-05</text><text x="1007.5" y="549.7" font-size="10" text-anchor="middle" fill="#000" letter-spacing="0.6">Q=5E-05</text></svg>
</body></html>
